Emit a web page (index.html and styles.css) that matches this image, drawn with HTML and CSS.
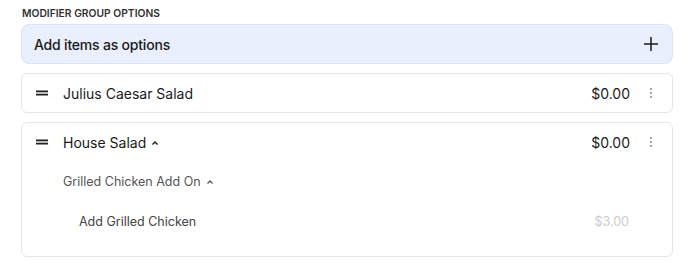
FILE: index.html
```html
<!DOCTYPE html>
<html>
<head>
<meta charset="utf-8">
<link rel="stylesheet" href="styles.css">
</head>
<body>
<div class="page">
  <div class="label">MODIFIER GROUP OPTIONS</div>
  <div class="add-box">
    <span class="add-text">Add items as options</span>
    <svg class="plus" width="16" height="16" viewBox="0 0 16 16"><path d="M8 1v14M1 8h14" stroke="#1a1a1a" stroke-width="1.5" fill="none"/></svg>
  </div>
  <div class="card">
    <div class="row">
      <svg class="drag" width="12" height="6" viewBox="0 0 12 6"><rect x="0" y="0.5" width="12" height="1.8" fill="#222"/><rect x="0" y="3.7" width="12" height="1.8" fill="#222"/></svg>
      <span class="name">Julius Caesar Salad</span>
      <span class="price">$0.00</span>
      <span class="kebab"><i></i><i></i><i></i></span>
    </div>
  </div>
  <div class="card">
    <div class="row">
      <svg class="drag" width="12" height="6" viewBox="0 0 12 6"><rect x="0" y="0.5" width="12" height="1.8" fill="#222"/><rect x="0" y="3.7" width="12" height="1.8" fill="#222"/></svg>
      <span class="name">House Salad</span>
      <svg class="caret" width="8" height="6" viewBox="0 0 8 6"><path d="M1.5 4.5L4 2l2.5 2.5" stroke="#222" stroke-width="1.5" fill="none"/></svg>
      <span class="price">$0.00</span>
      <span class="kebab"><i></i><i></i><i></i></span>
    </div>
    <div class="sub-row">
      <span class="sub-name">Grilled Chicken Add On</span>
      <svg class="caret" width="8" height="6" viewBox="0 0 8 6"><path d="M1.5 4.5L4 2l2.5 2.5" stroke="#555" stroke-width="1.3" fill="none"/></svg>
    </div>
    <div class="item-row">
      <span class="item-name">Add Grilled Chicken</span>
      <span class="item-price">$3.00</span>
    </div>
  </div>
</div>
</body>
</html>
```
FILE: styles.css
```css
* { box-sizing: border-box; }
html, body { margin: 0; padding: 0; background: #fff; }
body { font-family: Inter, "Noto Sans", sans-serif; color: #1a1a1a; }
.page { padding: 6px 15px 0 21px; display: flex; flex-direction: column; }
.label { font-size: 10.3px; font-weight: 600; color: #333; line-height: 14px; margin-bottom: 4px; padding-left: 1px; }
.add-box { height: 40px; background: #e9effd; border: 1px solid #dce5f8; border-radius: 8px; display: flex; align-items: center; padding: 0 13px 0 12px; margin-bottom: 9px; }
.add-text { font-size: 14px; font-weight: 500; flex: 1; letter-spacing: -0.2px; }
.card { border: 1px solid #e6e6e6; border-radius: 6px; margin-bottom: 9px; }
.row { height: 38px; display: flex; align-items: center; padding: 0 13px 0 14px; }
.drag { margin-right: 15px; }
.name { font-size: 14px; }
.caret { margin-left: 5px; margin-top: 1px; }
.price { margin-left: auto; font-size: 14px; }
.kebab { width: 16px; margin-left: 13px; display: flex; flex-direction: column; align-items: center; gap: 2px; }
.kebab i { display: block; width: 2px; height: 2px; border-radius: 1px; background: #888; }
.sub-row { height: 40px; display: flex; align-items: center; padding-left: 41px; }
.sub-name { font-size: 12.5px; color: #555; }
.item-row { height: 40px; display: flex; align-items: center; padding: 0 43px 0 57px; margin-bottom: 15px; }
.item-name { font-size: 12.5px; color: #444; }
.item-price { margin-left: auto; font-size: 12.5px; color: #ccc; }
```
